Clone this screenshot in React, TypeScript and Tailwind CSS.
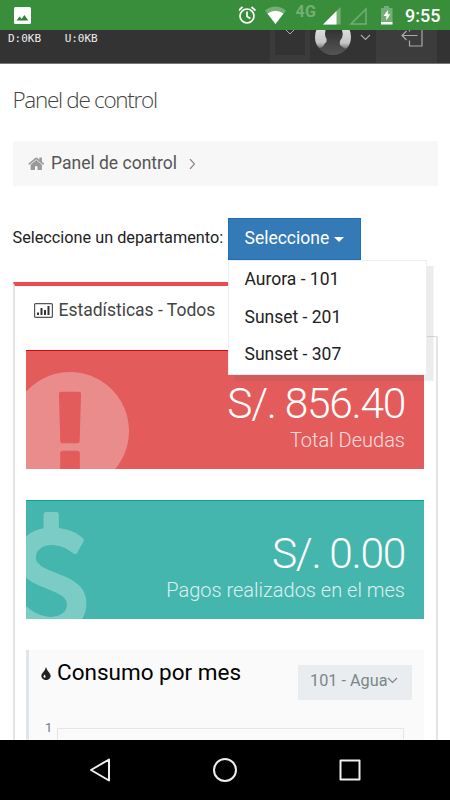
import type { ReactNode } from 'react';

const DEPARTMENTS = ['Aurora - 101', 'Sunset - 201', 'Sunset - 307'];

function StatusBar() {
  return (
    <div className="flex h-[30px] shrink-0 items-center bg-[#398e3c] pl-3.5 font-['Roboto',sans-serif]">
      <svg className="h-[17px] w-[17px]" viewBox="0 0 17 17">
        <rect width="17" height="17" rx="1.500" fill="#fff" />
        <path d="M2.500 13.500l3.200-4 2 2.500 2.600-4 4 5.500z" fill="#2c8430" />
      </svg>
      <svg className="ml-auto h-[30px] w-[211px]" viewBox="0 0 211 30" fill="none">
        <g stroke="#fff" strokeWidth="1.700">
          <circle cx="8" cy="16" r="7" />
          <path d="M8 11.500v5l3.400 2M-.5 10.500l4-3.500M16.500 10.500l-4-3.500" />
        </g>
        <path d="M26 10.500Q36.500 2.500 47 10.500L36.500 24z" fill="#74ae76" />
        <path d="M28.500 13.500Q36.500 8 44.500 13.500L36.500 24z" fill="#fff" />
        <text x="56.500" y="16.500" fontSize="16" fontWeight="700" letterSpacing=".4" fill="#74ae76">4G</text>
        <path d="M101.500 7v17.500H84z" fill="#74ae76" />
        <path d="M97.500 11v13.500H84z" fill="#fff" />
        <path d="M127 9v15h-15z" stroke="#74ae76" strokeWidth="1.500" />
        <path d="M145 6h5v2h3.500v14.500H142V8h3z" fill="#74ae76" />
        <path d="M142 22h11.500v2.500H142zM149 10l-4.500 6h2.800v4.500l4-6.300h-2.500z" fill="#fff" />
        <text x="166" y="21.500" fontSize="18" fontWeight="500" fill="#fff">9:55</text>
      </svg>
    </div>
  );
}

function Header() {
  return (
    <div className="flex h-[34px] shrink-0 overflow-hidden border-b border-[#777] bg-[#333]">
      <div className="flex gap-[23.500px] pl-2 pt-[2px] font-['DejaVu_Sans_Mono',monospace] text-[11px] leading-[13px] text-[#eee]">
        <span>D:0KB</span>
        <span>U:0KB</span>
      </div>
      <div className="ml-auto flex">
        <div className="w-10 bg-[#3b3b3b] px-[5px]">
          <div className="flex h-[25px] justify-center bg-[#333]">
            <svg className="h-2 w-2.5" viewBox="0 0 10 8" fill="none" stroke="#aaa">
              <path d="M1 0l4 4 4-4" />
            </svg>
          </div>
        </div>
        <svg className="ml-[5px] h-[25px] w-9" viewBox="0 0 36 25">
          <defs>
            <clipPath id="avatar">
              <circle cx="18" cy="7" r="18" />
            </clipPath>
            <linearGradient id="hair" x2="0" y2="1">
              <stop stopColor="#ddd" />
              <stop offset=".7" stopColor="#c4c4c4" />
              <stop offset="1" stopColor="#777" />
            </linearGradient>
            <linearGradient id="backdrop" x2="0" y2="1">
              <stop stopColor="#333" />
              <stop offset="1" stopColor="#555" />
            </linearGradient>
          </defs>
          <g clipPath="url(#avatar)">
            <path d="M0 0h36v25H0z" fill="url(#backdrop)" />
            <path d="M0 0h10.500q-1 4 0 7 2 2 1 5-2 1-3 4-2 2-4 2L0 14z" fill="url(#hair)" />
            <path d="M36 0H27q1.500 4 0 8-3 3-2 7 2 2 4 3 2 1 3 0l4-4z" fill="url(#hair)" />
          </g>
        </svg>
        <svg className="ml-[9px] mt-1 h-[7px] w-[11px]" viewBox="0 0 11 7" fill="none" stroke="#aaa" strokeWidth="1.200">
          <path d="M1 1l4.500 4.500L10 1" />
        </svg>
        <div className="ml-[5px] w-[61px] bg-[#3c3c3c] pl-6">
          <svg className="h-[17px] w-6" viewBox="0 0 24 17" fill="none" stroke="#aaa" strokeWidth="1.200">
            <path d="M9.500 0v1.500M9.500 10.500V16H22V0M17.500 5.500H2M6.500 1L2 5.500 6.500 10" />
          </svg>
        </div>
        <div className="w-[13px]" />
      </div>
    </div>
  );
}

function Stat({ color, value, label, icon }: { color: string; value: string; label: string; icon: ReactNode }) {
  return (
    <div className={`relative flex h-[119px] flex-col items-end overflow-hidden border-t pr-[19px] text-white ${color}`}>
      <div className="absolute -left-[14.600px] top-[11px]">{icon}</div>
      <div className="relative mt-[29px] text-[42.500px] font-light leading-[48px] tracking-[-1.300px]">{value}</div>
      <div className="relative text-[20px] font-light leading-6 opacity-80">{label}</div>
    </div>
  );
}

export default function App() {
  return (
    <div className="flex h-[800px] w-[450px] flex-col overflow-hidden bg-white font-['Roboto',sans-serif] text-[#222]">
      <StatusBar />
      <Header />
      <main className="min-h-0 flex-1 overflow-hidden px-[12.500px]">
        <h1 className="mt-5 h-8 font-['Open_Sans',sans-serif] text-[22.500px] font-light leading-8 tracking-[-1.300px] text-[#444]">
          Panel de control
        </h1>
        <div className="mt-[25px] flex h-[45px] items-center bg-[#f7f7f7] pl-[15px]">
          <svg className="h-[17.500px] w-[16.500px]" viewBox="0 0 1664 1792" fill="#999">
            <path d="M1408 992v480q0 26-19 45t-45 19h-384v-384h-256v384h-384q-26 0-45-19t-19-45v-480q0-1 .5-3t.5-3l575-474 575 474q1 2 1 6zm223-69l-62 74q-8 9-21 11h-3q-13 0-21-7l-692-577-692 577q-12 8-24 7-13-2-21-11l-62-74q-8-10-7-23.500t11-21.500l719-599q32-26 76-26t76 26l244 204v-195q0-14 9-23t23-9h192q14 0 23 9t9 23v408l219 182q10 8 11 21.500t-7 23.500z" />
          </svg>
          <span className="-mt-[2px] ml-[7px] text-[17.500px] leading-6 text-[#555]">Panel de control</span>
          <svg className="ml-3 h-2.5 w-1.5" viewBox="0 0 6 10" fill="none" stroke="#888" strokeWidth="1.200">
            <path d="M1 0l4.500 5L1 10" />
          </svg>
        </div>

        <div className="mt-[32px] flex h-[42px]">
          <span className="w-[215px] pt-2 text-[16.250px] leading-6 text-[#222]">Seleccione un departamento:</span>
          <div className="relative z-10">
            <button className="flex h-[42px] w-[133.500px] items-center border border-[#1d6fb8] bg-[#337ab7] pb-px pl-4 text-[17.500px] text-white">
              Seleccione
              <span className="ml-[5px] mt-0.5 border-x-[5px] border-t-[5px] border-x-transparent border-t-white" />
            </button>
            <ul className="absolute left-0 top-full flex h-[115px] w-[199.500px] flex-col border border-[#eee] bg-white shadow-[6.500px_6px_rgba(102,102,102,0.12)]">
              {DEPARTMENTS.map((name) => (
                <li key={name} className="h-[37.500px] pl-4 text-[17.500px] leading-[37.500px] text-[#222]">{name}</li>
              ))}
            </ul>
          </div>
        </div>

        <div className="mt-[22px] flex h-[54px] w-[230px] items-center border-l-2 border-t-4 border-l-[#e4e4e4] border-t-[#ed4b52] pl-[19.500px]">
          <svg className="-mt-0.5 h-[15px] w-[19px]" viewBox="0 0 19 15">
            <rect x=".6" y=".6" width="17.800" height="13.800" rx="1" fill="none" stroke="#555" strokeWidth="1.200" />
            <path d="M3 9.500h2V12H3zM6.500 5h2v7h-2zM10 7h2v5h-2zM13.500 3h2v9h-2z" fill="#333" />
          </svg>
          <span className="-mt-[2px] ml-[5.500px] text-[17.500px] leading-6 text-[#444]">Estadísticas - Todos</span>
        </div>
        <div className="flex h-[420px] flex-col border-x-2 border-[#e4e4e4]">
          <div className="ml-[230px] h-px shrink-0 bg-[#ddd]" />
          <div className="flex flex-col gap-[31px] px-[11.500px] pt-[13px]">
            <Stat
              color="bg-[#e35b5a] border-t-[#e00505]"
              value="S/. 856.40"
              label="Total Deudas"
              icon={
                <svg className="h-[138px] w-[118px] opacity-30" viewBox="0 0 1536 1792" fill="#fff">
                  <path d="M768 128q209 0 385.500 103t279.500 279.500 103 385.500-103 385.500-279.500 279.500-385.500 103-385.500-103-279.500-279.500-103-385.500 103-385.500 279.500-279.500 385.500-103zm128 1247v-190q0-14-9-23.500t-22-9.500h-192q-13 0-23 10t-10 23v190q0 13 10 23t23 10h192q13 0 22-9.500t9-23.500zm-2-344l18-621q0-12-10-18-10-8-24-8h-220q-14 0-24 8-10 6-10 18l17 621q0 10 10 17.500t24 7.500h185q14 0 23.500-7.500t10.500-17.500z" />
                </svg>
              }
            />
            <Stat
              color="bg-[#44b6ae] border-t-[#05a599]"
              value="S/. 0.00"
              label="Pagos realizados en el mes"
              icon={
                <svg className="h-[138px] w-[79px] opacity-30" viewBox="0 0 1024 1792" fill="#fff">
                  <path d="M978 1185q0 153-99.500 263.500t-258.500 136.500v175q0 14-9 23t-23 9h-135q-13 0-22.500-9.500t-9.500-22.500v-175q-66-9-127.500-31t-101.500-44.500-74-48-46.500-37.500-17.500-18q-17-21-2-41l103-135q7-10 23-12 15-2 24 9l2 2q113 99 243 125 37 8 74 8 81 0 142.500-43t61.500-122q0-28-15-53t-33.500-42-58.500-37.500-66-32-80-32.500q-39-16-61.500-25t-61.500-26.500-62.500-31-56.500-35.500-53.500-42.500-43.500-49-35.500-58-21-66.500-8.500-78q0-138 98-242t255-134v-180q0-13 9.500-22.500t22.500-9.500h135q14 0 23 9t9 23v176q57 6 110.500 23t87 33.500 63.500 37.500 39 29 15 14q17 18 5 38l-81 146q-8 15-23 16-14 3-27-7-3-3-14.500-12t-39-26.500-58.500-32-74.500-26-85.500-11.500q-95 0-155 43t-60 111q0 26 8.500 48t29.500 41.500 39.500 33 56 31 60.500 27 70 27.500q53 20 81 31.500t76 35 75.500 42.500 62 50 53 63.500 31.500 76.500 13 94z" />
                </svg>
              }
            />
            <div className="h-[119px] border-l-[3px] border-[#dfe5ea] bg-[#fafafa] pr-[12.500px]">
              <div className="flex pl-3">
                <svg className="mt-[17px] h-[13px] w-2.5" viewBox="0 0 10 13">
                  <path d="M5 0q.7 2.500 2.700 5T9.700 8.700A4.600 4.300 0 0 1 .3 8.700Q.3 7.200 2.300 5T5 0z" fill="#222" />
                  <path d="M3.500 7.500Q5 9 4.500 10.500 3 11 2.500 9.800 2.500 8.800 3.500 7.500z" fill="#fafafa" />
                </svg>
                <h2 className="ml-1.5 mt-2 text-[22.500px] leading-7 text-black">Consumo por mes</h2>
                <div className="ml-auto mt-[15px] flex h-[35px] w-[113.500px] bg-[#e9edef] pl-3 text-[16.250px] leading-[31px] text-[#7b8688]">
                  101 - Agua
                  <svg className="mt-3 h-[7px] w-[11px] shrink-0" viewBox="0 0 11 7" fill="none" stroke="#7b8688" strokeWidth="1.200">
                    <path d="M1 1l4.500 4.500L10 1" />
                  </svg>
                </div>
              </div>
              <div className="mt-5 flex pl-4">
                <span className="w-3 text-[13px] leading-[15px] text-[#6f7b8a]">1</span>
                <div className="mr-2 mt-2 h-10 flex-1 border-[1.500px] border-[#e6e6e6]" />
              </div>
            </div>
          </div>
        </div>
      </main>
      <nav className="flex h-[60px] shrink-0 items-center justify-center gap-[102px] bg-black">
        <svg className="h-6 w-[22px]" viewBox="0 0 22 24" fill="none" stroke="#eee" strokeWidth="2" strokeLinejoin="round">
          <path d="M20 1.500v21L2 12z" />
        </svg>
        <svg className="h-6 w-6" viewBox="0 0 24 24" fill="none" stroke="#eee" strokeWidth="2">
          <circle cx="12" cy="12" r="11" />
        </svg>
        <svg className="h-[22px] w-[22px]" viewBox="0 0 22 22" fill="none" stroke="#eee" strokeWidth="2" strokeLinejoin="round">
          <path d="M1.500 1.500h19v19h-19z" />
        </svg>
      </nav>
    </div>
  );
}
